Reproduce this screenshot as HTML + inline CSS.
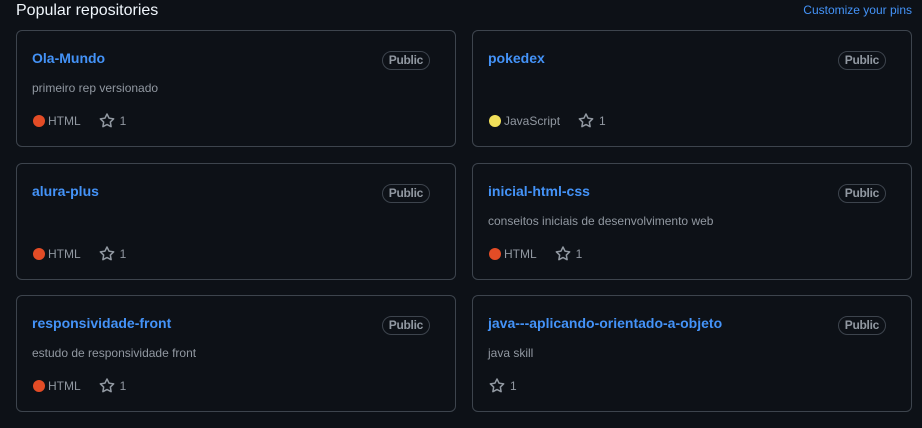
<!DOCTYPE html>
<html><head><meta charset="utf-8"><style>
*{box-sizing:border-box;margin:0;padding:0}
body{width:922px;height:428px;background:#0d1117;font-family:"Liberation Sans",sans-serif;position:relative;overflow:hidden;color:#9198a1}
.h{position:absolute;left:16px;top:1px;font-size:16px;color:#f0f6fc;line-height:20px}
.cust{position:absolute;right:10px;top:2px;font-size:12px;color:#4493f8;line-height:16px}
.card{position:absolute;width:440px;height:117px;border:1px solid #3d444d;border-radius:6px}
.t{position:absolute;left:15px;top:18px;font-size:14px;font-weight:bold;color:#4493f8;line-height:18px}
.b{position:absolute;right:25px;top:20px;height:19px;border:1px solid #3d444d;border-radius:10px;font-size:12px;padding:0 6px;line-height:17px;color:#9198a1;font-weight:bold;letter-spacing:-0.3px}
.d{position:absolute;left:15px;top:49px;font-size:12px;line-height:16px}
.m{position:absolute;left:16px;top:82px;font-size:12px;line-height:16px;display:flex;align-items:center}
.dot{width:12px;height:12px;border-radius:50%;margin-right:3px}
.s{display:flex;align-items:center}
.s svg{margin-right:5px}
.l{margin-right:18px}
</style></head><body>
<div class="h">Popular repositories</div>
<div class="cust">Customize your pins</div>

<div class="card" style="left:16px;top:30px"><div class="t">Ola-Mundo</div><div class="b">Public</div><div class="d">primeiro rep versionado</div>
<div class="m"><span class="dot" style="background:#e34c26"></span><span class="l">HTML</span><span class="s"><svg width="16" height="16" viewBox="0 0 16 16" fill="#9198a1"><path d="M8 .25a.75.75 0 0 1 .673.418l1.882 3.815 4.21.612a.75.75 0 0 1 .416 1.279l-3.046 2.97.719 4.192a.751.751 0 0 1-1.088.791L8 12.347l-3.766 1.98a.75.75 0 0 1-1.088-.79l.72-4.194L.818 6.374a.75.75 0 0 1 .416-1.28l4.21-.611L7.327.668A.75.75 0 0 1 8 .25Zm0 2.445L6.615 5.5a.75.75 0 0 1-.564.41l-3.097.45 2.24 2.184a.75.75 0 0 1 .216.664l-.528 3.084 2.769-1.456a.75.75 0 0 1 .698 0l2.77 1.456-.53-3.084a.75.75 0 0 1 .216-.664l2.24-2.183-3.096-.45a.75.75 0 0 1-.564-.41L8 2.694Z"/></svg>1</span></div></div>

<div class="card" style="left:472px;top:30px"><div class="t">pokedex</div><div class="b">Public</div>
<div class="m"><span class="dot" style="background:#f1e05a"></span><span class="l">JavaScript</span><span class="s"><svg width="16" height="16" viewBox="0 0 16 16" fill="#9198a1"><path d="M8 .25a.75.75 0 0 1 .673.418l1.882 3.815 4.21.612a.75.75 0 0 1 .416 1.279l-3.046 2.97.719 4.192a.751.751 0 0 1-1.088.791L8 12.347l-3.766 1.98a.75.75 0 0 1-1.088-.79l.72-4.194L.818 6.374a.75.75 0 0 1 .416-1.28l4.21-.611L7.327.668A.75.75 0 0 1 8 .25Zm0 2.445L6.615 5.5a.75.75 0 0 1-.564.41l-3.097.45 2.24 2.184a.75.75 0 0 1 .216.664l-.528 3.084 2.769-1.456a.75.75 0 0 1 .698 0l2.77 1.456-.53-3.084a.75.75 0 0 1 .216-.664l2.24-2.183-3.096-.45a.75.75 0 0 1-.564-.41L8 2.694Z"/></svg>1</span></div></div>

<div class="card" style="left:16px;top:163px"><div class="t">alura-plus</div><div class="b">Public</div>
<div class="m"><span class="dot" style="background:#e34c26"></span><span class="l">HTML</span><span class="s"><svg width="16" height="16" viewBox="0 0 16 16" fill="#9198a1"><path d="M8 .25a.75.75 0 0 1 .673.418l1.882 3.815 4.21.612a.75.75 0 0 1 .416 1.279l-3.046 2.97.719 4.192a.751.751 0 0 1-1.088.791L8 12.347l-3.766 1.98a.75.75 0 0 1-1.088-.79l.72-4.194L.818 6.374a.75.75 0 0 1 .416-1.28l4.21-.611L7.327.668A.75.75 0 0 1 8 .25Zm0 2.445L6.615 5.5a.75.75 0 0 1-.564.41l-3.097.45 2.24 2.184a.75.75 0 0 1 .216.664l-.528 3.084 2.769-1.456a.75.75 0 0 1 .698 0l2.77 1.456-.53-3.084a.75.75 0 0 1 .216-.664l2.24-2.183-3.096-.45a.75.75 0 0 1-.564-.41L8 2.694Z"/></svg>1</span></div></div>

<div class="card" style="left:472px;top:163px"><div class="t">inicial-html-css</div><div class="b">Public</div><div class="d">conseitos iniciais de desenvolvimento web</div>
<div class="m"><span class="dot" style="background:#e34c26"></span><span class="l">HTML</span><span class="s"><svg width="16" height="16" viewBox="0 0 16 16" fill="#9198a1"><path d="M8 .25a.75.75 0 0 1 .673.418l1.882 3.815 4.21.612a.75.75 0 0 1 .416 1.279l-3.046 2.97.719 4.192a.751.751 0 0 1-1.088.791L8 12.347l-3.766 1.98a.75.75 0 0 1-1.088-.79l.72-4.194L.818 6.374a.75.75 0 0 1 .416-1.28l4.21-.611L7.327.668A.75.75 0 0 1 8 .25Zm0 2.445L6.615 5.5a.75.75 0 0 1-.564.41l-3.097.45 2.24 2.184a.75.75 0 0 1 .216.664l-.528 3.084 2.769-1.456a.75.75 0 0 1 .698 0l2.77 1.456-.53-3.084a.75.75 0 0 1 .216-.664l2.240-2.183-3.096-.45a.75.75 0 0 1-.564-.41L8 2.694Z"/></svg>1</span></div></div>

<div class="card" style="left:16px;top:295px"><div class="t">responsividade-front</div><div class="b">Public</div><div class="d">estudo de responsividade front</div>
<div class="m"><span class="dot" style="background:#e34c26"></span><span class="l">HTML</span><span class="s"><svg width="16" height="16" viewBox="0 0 16 16" fill="#9198a1"><path d="M8 .25a.75.75 0 0 1 .673.418l1.882 3.815 4.21.612a.75.75 0 0 1 .416 1.279l-3.046 2.97.719 4.192a.751.751 0 0 1-1.088.791L8 12.347l-3.766 1.98a.75.75 0 0 1-1.088-.79l.72-4.194L.818 6.374a.75.75 0 0 1 .416-1.28l4.21-.611L7.327.668A.75.75 0 0 1 8 .25Zm0 2.445L6.615 5.5a.75.75 0 0 1-.564.41l-3.097.45 2.24 2.184a.75.75 0 0 1 .216.664l-.528 3.084 2.769-1.456a.75.75 0 0 1 .698 0l2.77 1.456-.53-3.084a.75.75 0 0 1 .216-.664l2.24-2.183-3.096-.45a.75.75 0 0 1-.564-.41L8 2.694Z"/></svg>1</span></div></div>

<div class="card" style="left:472px;top:295px"><div class="t">java---aplicando-orientado-a-objeto</div><div class="b">Public</div><div class="d">java skill</div>
<div class="m"><span class="s"><svg width="16" height="16" viewBox="0 0 16 16" fill="#9198a1"><path d="M8 .25a.75.75 0 0 1 .673.418l1.882 3.815 4.21.612a.75.75 0 0 1 .416 1.279l-3.046 2.97.719 4.192a.751.751 0 0 1-1.088.791L8 12.347l-3.766 1.98a.75.75 0 0 1-1.088-.79l.72-4.194L.818 6.374a.75.75 0 0 1 .416-1.28l4.21-.611L7.327.668A.75.75 0 0 1 8 .25Zm0 2.445L6.615 5.5a.75.75 0 0 1-.564.41l-3.097.45 2.24 2.184a.75.75 0 0 1 .216.664l-.528 3.084 2.769-1.456a.75.75 0 0 1 .698 0l2.77 1.456-.53-3.084a.75.75 0 0 1 .216-.664l2.24-2.183-3.096-.45a.75.75 0 0 1-.564-.41L8 2.694Z"/></svg>1</span></div></div>
</body></html>
